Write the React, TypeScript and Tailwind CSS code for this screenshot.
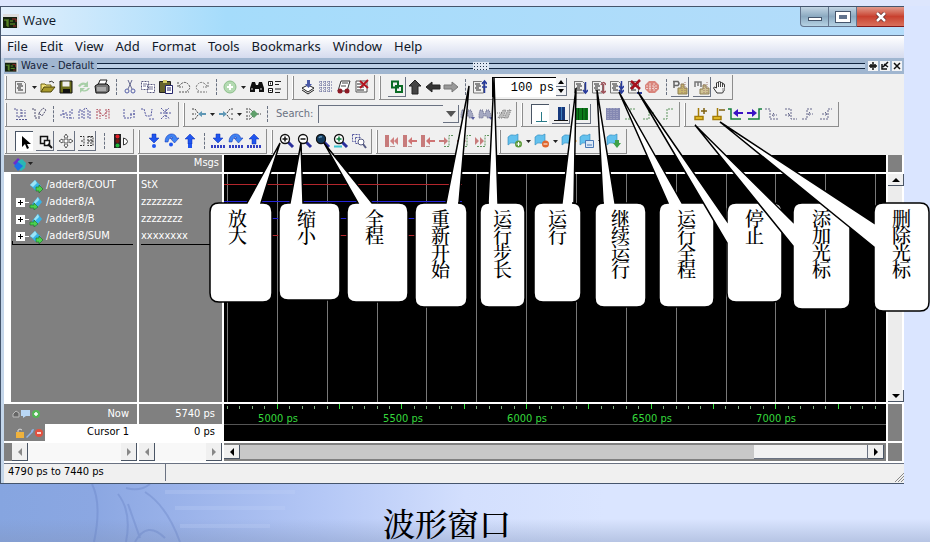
import type { ReactNode } from "react";

interface IToolProps {
	name: string;
	label?: string;
	raised?: boolean;
	pressed?: boolean;
}

const page = (
	<>
		<path d="M2.5 2v12M2.5 2.5h8l2 2v9.5h-10" fill="none" stroke="#777" />
		<path d="M4 5h5M5 7h5M4 9h4M5 11h5" stroke="#222" />
	</>
);

const lens = (
	<>
		<path d="M9 9l5 5" stroke="#2a2f9c" strokeWidth="3" />
		<circle cx="6" cy="6" r="4.5" fill="#fff" stroke="#111" strokeWidth="1.3" />
	</>
);

const downArrow = (
	<path d="M6 1h4v4h3L8 10 3 5h3z" fill="#1f55ee" stroke="#0b2bb0" strokeWidth=".5" />
);

const hopArrow = (
	<path d="M1 9C1-1 12-1 12.500 5H15l-4.500 5L6 5h3C7 2.500 5 5 4 9z" fill="#3f83f2" stroke="#0b2bb0" strokeWidth=".5" />
);

const upArrow = (
	<path d="M6 11V6H3l5-5 5 5h-3v5z" fill="#1f55ee" stroke="#0b2bb0" strokeWidth=".5" />
);

const flag = (
	<path d="M1 4q3-3 5-2t5-1v8q-3 2-5 1t-5 2z" fill="#63c1ee" stroke="#2c86bb" strokeWidth=".6" />
);

const dots = <path d="M1 13.500h14" stroke="#3340c0" strokeWidth="3" strokeDasharray="2 1" />;

const icons: Record<string, ReactNode> = {
	new: page,
	open: (
		<>
			<path d="M1 13V5h4l1 1h5v2" fill="#f2e27a" stroke="#6f6415" />
			<path d="M1 13l3-5h11l-4 5z" fill="#a8992c" stroke="#4d450c" />
			<path d="M9 3q3-2 5 1" fill="none" stroke="#333" />
		</>
	),
	save: (
		<>
			<path d="M2 2h12v12H2z" fill="#6b6d1c" stroke="#111" />
			<path d="M4.500 2.500h7v5h-7z" fill="#eee" />
			<path d="M5 10h7v4H5z" fill="#111" />
		</>
	),
	reload: <path d="M2 7q3-5 8-3l2-2v6H7l2-2q-3-1-5 2zM14 9q-3 5-8 3l-2 2V9h5l-2 2q3 1 5-2z" fill="#a7cfa7" />,
	print: (
		<>
			<path d="M4 6l2-5h7l-2 5" fill="#fff" stroke="#222" />
			<path d="M1 7l3-2h9l2 2v5l-3 2H2z" fill="#777" stroke="#111" />
			<path d="M3 9h9M3 11h9" stroke="#ddd" />
		</>
	),
	cut: (
		<>
			<path d="M6 1l4 9M10 1L6 10" stroke="#666a92" />
			<circle cx="5" cy="12" r="2" fill="none" stroke="#5560a8" />
			<circle cx="11" cy="12" r="2" fill="none" stroke="#5560a8" />
		</>
	),
	copy: (
		<>
			<path d="M1.500 2.500h7v8h-7zM7.500 5.500h7v8h-7z" fill="#fff" stroke="#55557c" strokeDasharray="2 1" />
			<path d="M3 5h4M3 7h3M9 8h4M9 10h4" stroke="#757595" />
		</>
	),
	paste: (
		<>
			<path d="M1.500 2.500h11v11h-11z" fill="#65632c" stroke="#222" />
			<path d="M5 1h4v3H5z" fill="#d7cf6a" />
			<path d="M7.500 6.500h7v8h-7z" fill="#fff" stroke="#24246a" />
			<path d="M9 9h4M9 11h4" stroke="#24246a" />
		</>
	),
	undo: <path d="M2 3v5h5M3 7q5-6 9-2t-1 7M3 13h10" fill="none" stroke="#555" strokeDasharray="2 1" />,
	redo: <path d="M14 3v5H9M13 7q-5-6-9-2t1 7M3 13h10" fill="none" stroke="#777" strokeDasharray="2 1" />,
	add: (
		<>
			<circle cx="8" cy="8" r="6" fill="#b4dab2" stroke="#8cbf8a" />
			<path d="M8 5v6M5 8h6" stroke="#fff" strokeWidth="2" />
		</>
	),
	find: (
		<>
			<path d="M3 3h3l1 3h2l1-3h3l2 6v4h-5v-3H6v3H1V9z" fill="#111" />
			<path d="M3 9v2M12 9v2" stroke="#ddd" />
		</>
	),
	tree: (
		<>
			<path d="M1.500 2.500h4v4h-4zM1.500 9.500h4v4h-4z" fill="#fff" stroke="#111" />
			<path d="M3.500 3.500v2M2.500 11.500h2M8 2.500h6M8 5.500h4M8 10h6M8 13.500h5" stroke="#222" />
		</>
	),
	compile: (
		<>
			<path d="M2 9l6-3 6 3-6 4z" fill="#fff" stroke="#222" />
			<path d="M2 11l6 4 6-4" fill="none" stroke="#222" />
			<path d="M7 1h3v4h2L8.500 9 5 5h2z" fill="#4b5aa8" />
		</>
	),
	grid: <path d="M1 3h14M1 6h14M1 9h14M1 12h14M3 2v12M7 2v12M11 2v12" stroke="#555a8f" strokeDasharray="1 1" />,
	simulate: (
		<>
			<path d="M5 2h9l-3 10H2z" fill="#fff" stroke="#333" />
			<path d="M6 4h6M5 7h5" stroke="#444" />
			<circle cx="4" cy="12" r="2.500" fill="#8d1a25" />
			<circle cx="11" cy="12" r="2.500" fill="#8d1a25" />
		</>
	),
	breakSim: (
		<>
			<path d="M2 2h11v11H2z" fill="#fff" stroke="#555" />
			<path d="M3 5h5M3 8h7M3 11h7" stroke="#222" />
			<path d="M6 2l8 7M14 1L6 9" stroke="#b1121d" strokeWidth="2" />
		</>
	),
	env: <path d="M3 2.500h6v6H3zM7 7h6v6H7z" fill="none" stroke="#0a6b25" strokeWidth="2" />,
	up: <path d="M8 1l6 6h-3v8H5V7H2z" fill="#444" stroke="#222" />,
	back: <path d="M1 8l6-5v3h8v4H7v3z" fill="#333" stroke="#222" />,
	forward: <path d="M15 8L9 3v3H1v4h8v3z" fill="#999" stroke="#777" />,
	restart: (
		<>
			{page}
			<path d="M13.500 2v12M11 5l2.500-3L16 5M11 8h5" fill="none" stroke="#273a9c" strokeWidth="1.500" />
		</>
	),
	run: (
		<>
			{page}
			<path d="M13.500 3v11M11 11l2.500 3 2.500-3" fill="none" stroke="#273a9c" strokeWidth="1.500" />
		</>
	),
	runContinue: (
		<>
			{page}
			<path d="M13.500 5v9M11 6q2.500-5 5 0M11 12l2.500 2 2.500-2" fill="none" stroke="#a0525a" strokeWidth="1.500" />
		</>
	),
	runAll: (
		<>
			{page}
			<path d="M13.500 2v12M11 7l2.500 3L16 7M11 11l2.500 3 2.500-3" fill="none" stroke="#273a9c" strokeWidth="1.500" />
		</>
	),
	stop: (
		<>
			{page}
			<path d="M5 2l9 8M14 1L5 10" stroke="#a5111b" strokeWidth="2.500" />
			<path d="M11 14h5" stroke="#273a9c" strokeWidth="2" />
		</>
	),
	halt: (
		<>
			<path d="M5 2h6l4 4v4l-4 4H5l-4-4V6z" fill="#d9857c" />
			<path d="M2 7h12M2 9.500h12M6 4v8M10 4v8" stroke="#f1d3cf" strokeDasharray="2 1" />
		</>
	),
	profile: (
		<>
			<path d="M1 2.500h5q2 2 0 4H2M2 3v6" fill="none" stroke="#666" strokeWidth="1.500" />
			<path d="M6 9h3V5h3v4h3v6H6z" fill="#c8b66d" stroke="#8d7f52" />
			<path d="M10 5v9M13 3v12" stroke="#a07a70" strokeDasharray="1 1" />
		</>
	),
	memory: (
		<>
			<path d="M1 8V3h3v4V3h3v5" fill="none" stroke="#777" strokeWidth="1.500" />
			<path d="M6 10h3V6h3v3h3v6H6z" fill="#d0c394" stroke="#8d7f52" />
			<path d="M10 5v9M13 3v12" stroke="#a07a70" strokeDasharray="1 1" />
		</>
	),
	hand: (
		<>
			<path d="M5 14L1.500 9q0-2 3 0V4q1-2 2 0V3q1-2 2 0v1q1-2 2 0v1q2-1 2 1v5l-2 3z" fill="#f5f5f5" stroke="#333" />
			<path d="M6.500 4v4M8.500 4v4M10.500 5v3" stroke="#444" />
			<path d="M11 9v4M12.500 8v4" stroke="#888" />
		</>
	),
	edgeIn: <path d="M1 3h3v8h4V3M9 11V4M12 11V4M3 13.500h11" fill="none" stroke="#5b5d96" strokeDasharray="2 1" />,
	edit: <path d="M1 3h3v9h5M8 7l4-5 3 2-4 6zM8 7v4" fill="none" stroke="#505070" strokeDasharray="2 1" />,
	waveA: <path d="M1 9h3V3M5 12V7h3v5h3V5M11 12h4M13 3v5" fill="none" stroke="#5558a0" strokeDasharray="2 1" />,
	waveB: <path d="M2 13V4h3v9M7 13V3l2-1 2 2v9M13 13V5" fill="none" stroke="#5558a0" strokeDasharray="2 1" />,
	waveC: <path d="M2 13V3l6 7 6-7v10M5 3v10M11 3v10" fill="none" stroke="#b04a58" strokeDasharray="2 1" />,
	waveD: <path d="M2 3v9h7V8M8 8h6M12 4v8" fill="none" stroke="#5558a0" strokeDasharray="2 1" />,
	waveE: <path d="M1 3h3l2 7h5l1-7M9 13h6" fill="none" stroke="#5558a0" strokeDasharray="2 1" />,
	waveF: <path d="M3 2l4 4 4-4M2 7h12M3 13l4-4 5 4M8 3v10" fill="none" stroke="#5558a0" strokeDasharray="2 1" />,
	mergeLeft: (
		<>
			<path d="M1 3h3l3 4M1 13h3l3-4M1 8h4" fill="none" stroke="#444" strokeDasharray="2 1" />
			<path d="M7 8l4-3v2h4v2h-4v2z" fill="#5f97b5" />
		</>
	),
	splitRight: (
		<>
			<path d="M15 3h-3L9 7M15 13h-3L9 9M15 8h-3" fill="none" stroke="#444" strokeDasharray="2 1" />
			<path d="M9 8L5 5v2H1v2h4v2z" fill="#5f97b5" />
		</>
	),
	mergeBoth: (
		<>
			<path d="M1 3h4l3 3M1 13h4l3-3M1 6h4M1 10h4M12 8h4" fill="none" stroke="#444" strokeDasharray="2 1" />
			<path d="M5 8l4-4 4 4-4 4z" fill="#5f9f6a" />
		</>
	),
	findNext: (
		<>
			<path d="M2 4h3v3h3V4h3l2 5v3H9v-2H5v2H1V8z" fill="#a5a9c2" stroke="#6b6f8f" strokeDasharray="1 1" />
			<path d="M11 11h4l-2 3z" fill="#5a5fa0" />
		</>
	),
	findAll: <path d="M2 12l5-8h3l-3 8zM8 12l4-8h3l-3 8zM1 7h6" fill="#bbb" stroke="#777" strokeDasharray="1 1" />,
	viewLine: <path d="M8.500 5v9M3 14.500h11" stroke="#287a88" fill="none" />,
	viewBar: (
		<>
			<path d="M5 1h7v13H5z" fill="#16387c" />
			<path d="M8.500 1v13" stroke="#3d7db9" />
			<path d="M1 14.500h14" stroke="#111" />
		</>
	),
	viewFull: (
		<>
			<path d="M1 2h13v12H1z" fill="#0c7a1a" />
			<path d="M4.500 2v12M8.500 2v12M12 2v12" stroke="#064a0d" />
		</>
	),
	viewHatch: (
		<>
			<path d="M1 2h14v12H1z" fill="#8488b2" />
			<path d="M3 2v12M6 2v12M9 2v12M12 2v12" stroke="#b3b5cd" strokeDasharray="1 1" />
		</>
	),
	stepUp: <path d="M2 13h5V3h6" fill="none" stroke="#5f955f" strokeDasharray="2 1" />,
	stepMid: <path d="M2 13h6V3M8 7h5" fill="none" stroke="#5f955f" strokeDasharray="2 1" />,
	stepHigh: <path d="M4 13h4V3h7" fill="none" stroke="#5f955f" strokeDasharray="2 1" />,
	cursorAdd: (
		<>
			<path d="M6.500 2v8M3 10.500h8v3H3z" fill="#f0c92b" stroke="#a47c08" strokeWidth="1.500" />
			<path d="M9 5h6M12 2v6" stroke="#7d6010" strokeWidth="1.500" />
		</>
	),
	cursorDel: (
		<>
			<path d="M7.500 2v8M3 10.500h8v3H3z" fill="#f0c92b" stroke="#a47c08" strokeWidth="1.500" />
			<path d="M9 4h6" stroke="#7d6010" strokeWidth="1.500" />
		</>
	),
	prevEdge: (
		<>
			<path d="M0 3h3v10h10" fill="none" stroke="#15803d" strokeWidth="1.500" />
			<path d="M5 7l5-4v3h5v2h-5v3z" fill="#3a12c4" />
		</>
	),
	nextEdge: (
		<>
			<path d="M2 13h11V3h3" fill="none" stroke="#15803d" strokeWidth="1.500" />
			<path d="M11 7L6 3v3H1v2h5v3z" fill="#3a12c4" />
		</>
	),
	fallL: <path d="M1 3h5v10h8M9 9h4M10 7l-2 2 2 2" fill="none" stroke="#66698c" strokeDasharray="2 1" />,
	fallR: <path d="M3 3h6v10h6M3 9h5M6 7l2 2-2 2" fill="none" stroke="#66698c" strokeDasharray="2 1" />,
	riseL: <path d="M2 13h5V3h6M9 8h4M10 6l-2 2 2 2" fill="none" stroke="#66698c" strokeDasharray="2 1" />,
	riseR: <path d="M2 13h8V3h4M4 8h5M7 6l2 2-2 2" fill="none" stroke="#66698c" strokeDasharray="2 1" />,
	select: <path d="M5 2v11l3-3 2 5 2-1-2-4h4z" fill="#000" />,
	zoomMode: (
		<>
			<path d="M3.500 3.500h7v7h-7z" fill="none" stroke="#111" strokeWidth="1.500" />
			<path d="M7.500 7.500h5v5h-5z" fill="#fff" stroke="#111" strokeWidth="1.500" />
			<path d="M11 11l4 4" stroke="#111" strokeWidth="2" />
		</>
	),
	pan: <path d="M8 1l2 3H9v3h3V6l3 2-3 2V9H9v3h1l-2 3-2-3h1V9H4v1L1 8l3-2v1h3V4H6z" fill="#fff" stroke="#555" />,
	twoCursor: (
		<path d="M1 3.500h4v9H1M2 8h3M9 3v10M9 3.500h5v9H9M9 8h5M12 3v10" fill="none" stroke="#333" strokeDasharray="2 1" />
	),
	traffic: (
		<>
			<path d="M1 1h7v14H1z" fill="#222" />
			<circle cx="4.500" cy="3.500" r="2" fill="#e31e26" />
			<circle cx="4.500" cy="8" r="2" fill="#7b1b12" />
			<circle cx="4.500" cy="12.500" r="2" fill="#21b63a" />
			<path d="M10.500 5v7q4-1 4-3.500T10.500 5z" fill="#fff" stroke="#333" />
		</>
	),
	stepInto: (
		<>
			{downArrow}
			<circle cx="8" cy="13" r="2" fill="#1f55ee" />
		</>
	),
	stepOver: (
		<>
			{hopArrow}
			<circle cx="7" cy="11.500" r="2" fill="#1f55ee" />
		</>
	),
	stepOut: (
		<>
			{upArrow}
			<path d="M6 11h4v4H6z" fill="#1f55ee" />
		</>
	),
	stepIntoCur: (
		<>
			{downArrow}
			{dots}
		</>
	),
	stepOverCur: (
		<>
			{hopArrow}
			{dots}
		</>
	),
	stepOutCur: (
		<>
			{upArrow}
			{dots}
		</>
	),
	zoomIn: (
		<>
			{lens}
			<path d="M6 3.500v5M3.500 6h5" stroke="#111" strokeWidth="1.500" />
		</>
	),
	zoomOut: (
		<>
			{lens}
			<path d="M3.500 6h5" stroke="#111" strokeWidth="1.500" />
		</>
	),
	zoomFull: (
		<>
			{lens}
			<circle cx="6" cy="6" r="4.500" fill="#123a5e" stroke="#111" />
			<path d="M4 5q1-2 3-1" stroke="#5f93b7" fill="none" strokeWidth="1.500" />
		</>
	),
	zoomCursor: (
		<>
			<path d="M1 13.500h8" stroke="#39c5d0" strokeWidth="2" />
			{lens}
			<path d="M6 3.500v5M3.500 6h5" stroke="#0d7d3f" strokeWidth="1.500" />
		</>
	),
	zoomOther: (
		<>
			<path d="M1.500 1.500h7v6M4.500 4.500h6M1.500 1.500v7h3M4.500 4.500v6h3" fill="none" stroke="#5558a0" strokeDasharray="2 1" />
			<circle cx="10" cy="9" r="3" fill="#fff" stroke="#565b83" />
			<path d="M12 11l3 4" stroke="#565b83" strokeWidth="2" />
		</>
	),
	markA: (
		<>
			<path d="M1 2h4v12H1z" fill="#c77b7b" />
			<path d="M6 8l4-4v8zM10 8l4-4v8z" fill="#cf7f7f" />
			<path d="M6 13.500h5" stroke="#b99" />
		</>
	),
	markB: (
		<>
			<path d="M1 2h4v12H1z" fill="#c77b7b" />
			<path d="M6 8l4-4v3h5v2h-5v3z" fill="#cf7474" />
			<path d="M6 13.500h4" stroke="#b99" />
		</>
	),
	markC: (
		<>
			<path d="M10 8L6 4v3H1v2h5v3z" fill="#c77b7b" />
			<path d="M6 13.500h5V2.500h4" stroke="#5f955f" fill="none" strokeDasharray="2 1" />
		</>
	),
	markD: (
		<>
			<path d="M1 4l4 4-4 4zM6 4l4 4-4 4z" fill="#c77b7b" />
			<path d="M3 13.500h8V2.500h4" stroke="#5f955f" fill="none" strokeDasharray="2 1" />
		</>
	),
	flagAdd: (
		<>
			{flag}
			<circle cx="11.500" cy="11" r="3.500" fill="#5d9a3c" />
			<path d="M11.500 9v4M9.500 11h4" stroke="#fff" />
		</>
	),
	flagDel: (
		<>
			{flag}
			<circle cx="11.500" cy="11" r="3.500" fill="#e0662d" />
			<path d="M9.500 11h4" stroke="#fff" />
		</>
	),
	flagEdit: (
		<>
			{flag}
			<path d="M8 13l6-7 2 2-6 6z" fill="#e9a13a" />
		</>
	),
	flagSave: (
		<>
			{flag}
			<path d="M6.500 7.500h8v7h-8z" fill="#dbe9f7" stroke="#4877b5" />
			<path d="M8 12h5" stroke="#4877b5" />
		</>
	),
	flagGo: (
		<>
			{flag}
			<path d="M9 7h4v3h2l-4 5-4-5h2z" fill="#3fa14a" />
		</>
	),
};

const Tool = ({ name, label, raised, pressed }: IToolProps) => (
	<button
		type="button"
		aria-label={label ?? name}
		className={
			pressed
				? "flex h-5 w-[18px] shrink-0 items-center justify-center border-t border-l border-gray-600 bg-white"
				: raised
					? "flex h-5 w-[18px] shrink-0 items-center justify-center border-r border-b border-gray-500"
					: "flex h-5 w-[18px] shrink-0 items-center justify-center"
		}
	>
		<svg viewBox="0 0 16 16" className="size-4 shrink-0" aria-hidden="true">
			{icons[name]}
		</svg>
	</button>
);

const Caret = () => (
	<span className="flex w-[9px] shrink-0 items-center justify-center">
		<svg viewBox="0 0 5 3" className="h-[3px] w-[5px]" aria-hidden="true">
			<path d="M0 0h5L2.500 3z" fill="#222" />
		</svg>
	</span>
);

const Sep = () => (
	<span className="flex w-[10px] shrink-0 justify-center">
		<span className="h-4 border-l border-dashed border-gray-500" />
	</span>
);

const Group = ({ children, gap }: { children: ReactNode; gap?: boolean }) => (
	<div
		className={
			gap
				? "flex h-[25px] shrink-0 items-center gap-[3px] border-r border-b border-[#8d8d8d] pr-[3px]"
				: "flex h-[25px] shrink-0 items-center border-r border-b border-[#8d8d8d] pr-[3px]"
		}
	>
		<span className="mr-[5px] h-[23px] w-[2px] border-r border-[#8d8d8d] bg-white" />
		{children}
	</div>
);

const Tools = ({ names }: { names: string[] }) => (
	<>
		{names.map((name) => (
			<Tool key={name} name={name} />
		))}
	</>
);

const Toolbars = () => (
	<div className="flex flex-col gap-[2px] bg-[#f0f0f0] pt-px pb-px pl-px">
		<div className="flex gap-1">
			<Group>
				<Tool name="new" />
				<Caret />
				<Tools names={["open", "save", "reload", "print"]} />
				<Sep />
				<Tools names={["cut", "copy", "paste", "undo", "redo"]} />
				<Sep />
				<Tool name="add" />
				<Caret />
				<Tools names={["find", "tree"]} />
			</Group>
			<Group>
				<Tools names={["compile", "grid", "simulate", "breakSim"]} />
			</Group>
			<Group>
				<span className="w-[2px]" />
				<Tool name="env" raised />
				<Tools names={["up", "back", "forward"]} />
				<Sep />
				<Tool name="restart" label="重新开始" />
				<label className="ml-1 flex">
					<span className="sr-only">Run length</span>
					<input
						defaultValue="100 ps"
						size={6}
						className="h-5 w-[64px] border-t border-l border-black bg-white pr-[2px] text-right font-['Liberation_Mono',monospace] text-xs leading-[18px] text-black"
					/>
				</label>
				<span className="mr-1 flex flex-col">
					<button type="button" aria-label="Increase" className="flex h-[9px] w-[11px] items-center justify-center border-r border-b border-gray-500 bg-gray-100">
						<svg viewBox="0 0 6 4" className="h-1 w-[6px]"><path d="M3 0l3 4H0z" /></svg>
					</button>
					<button type="button" aria-label="Decrease" className="flex h-[9px] w-[11px] items-center justify-center border-r border-b border-gray-500 bg-gray-100">
						<svg viewBox="0 0 6 4" className="h-1 w-[6px]"><path d="M0 0h6L3 4z" /></svg>
					</button>
				</span>
				<Tools names={["run", "runContinue", "runAll", "stop", "halt"]} />
				<Sep />
				<Tool name="profile" raised />
				<span className="w-1" />
				<Tool name="memory" raised />
				<Tool name="hand" />
			</Group>
		</div>
		<div className="flex gap-1">
			<Group>
				<Tools names={["edgeIn", "edit"]} />
				<Sep />
				<Tools names={["waveA", "waveB", "waveC"]} />
				<span className="w-[9px]" />
				<Tools names={["waveD", "waveE", "waveF"]} />
			</Group>
			<Group>
				<Tool name="mergeLeft" />
				<Caret />
				<Tool name="splitRight" />
				<Caret />
				<Tool name="mergeBoth" />
				<Sep />
				<label htmlFor="search" className="ml-1 w-[42px] text-[11px] text-gray-500">
					Search:
				</label>
				<input id="search" className="h-[18px] w-[125px] border-t border-l border-gray-500 bg-[#f0f0f0] text-[11px]" />
				<button type="button" aria-label="Search history" className="flex h-[18px] w-4 items-center justify-center border-r border-b border-gray-500">
					<svg viewBox="0 0 10 6" className="h-[6px] w-[10px]"><path d="M0 0h10L5 6z" fill="#555" /></svg>
				</button>
				<Tool name="findNext" />
				<Tools names={["findNext", "findAll"]} />
			</Group>
			<Group gap>
				<Tool name="viewLine" pressed />
				<Tool name="viewBar" raised />
				<Tool name="viewFull" raised />
				<div className="flex items-center">
					<Sep />
					<Tools names={["viewHatch", "stepUp", "stepMid", "stepHigh"]} />
				</div>
			</Group>
			<Group>
				<Tools names={["cursorAdd", "cursorDel", "prevEdge", "nextEdge", "fallL", "fallR", "riseL", "riseR"]} />
			</Group>
		</div>
		<div className="flex gap-1">
			<Group gap>
				<Tool name="select" pressed />
				<Tool name="zoomMode" raised />
				<Tool name="pan" raised />
				<Tool name="twoCursor" raised />
				<Sep />
				<Tool name="traffic" />
			</Group>
			<Group>
				<Tools names={["stepInto", "stepOver", "stepOut"]} />
				<Sep />
				<Tools names={["stepIntoCur", "stepOverCur", "stepOutCur"]} />
			</Group>
			<Group>
				<Tool name="zoomIn" label="放大" />
				<Tool name="zoomOut" label="缩小" />
				<Tool name="zoomFull" label="全程" />
				<Tools names={["zoomCursor", "zoomOther"]} />
			</Group>
			<Group>
				<Tools names={["markA", "markB"]} />
				<Tool name="markB" />
				<Tool name="markC" />
				<Tool name="markC" />
				<Tool name="markD" />
			</Group>
			<Group>
				<Tool name="flagAdd" />
				<Caret />
				<Tool name="flagDel" />
				<Caret />
				<Tool name="flagEdit" />
				<Tool name="flagSave" />
				<Caret />
				<Tool name="flagGo" />
			</Group>
		</div>
	</div>
);

const AppIcon = ({ small }: { small?: boolean }) => (
	<svg viewBox="0 0 16 14" className={small ? "h-3 w-[13px]" : "h-[14px] w-4"} aria-hidden="true">
		<path d="M0 0h16v14H0z" fill="#ddd" />
		<path d="M0 3h14v11H0z" fill="#14220f" />
		<path d="M1 6h3v6M5 5v8M7 7h3M7 10h5" stroke="#6aa32f" fill="none" />
		<path d="M9 5h4v3M10 12h3" stroke="#a32a2a" fill="none" />
	</svg>
);

const TitleBar = () => (
	<div className="flex h-[29px] items-start border-t border-slate-600 bg-gradient-to-r from-[#e2effc] via-[#a5dcfb] via-25% to-[#b4dcfa]">
		<div className="flex h-full grow items-center gap-1 pl-[2px] font-['Open_Sans','Noto_Sans',sans-serif] text-[13px] text-gray-900">
			<AppIcon />
			Wave
		</div>
		<button type="button" aria-label="Minimize" className="flex h-5 w-[29px] items-center justify-center rounded-bl border-r border-b border-l border-slate-500 bg-gradient-to-b from-[#c3d5e4] via-[#8ba9c0] to-[#b5d2e4]">
			<span className="mt-1 h-1 w-[14px] border border-slate-600 bg-white" />
		</button>
		<button type="button" aria-label="Maximize" className="flex h-5 w-7 items-center justify-center border-r border-b border-slate-500 bg-gradient-to-b from-[#c3d5e4] via-[#8ba9c0] to-[#b5d2e4]">
			<span className="h-[10px] w-[14px] border-[3px] border-white bg-slate-500 outline outline-slate-600" />
		</button>
		<button type="button" aria-label="Close" className="flex h-5 w-[47px] items-center justify-center border-b border-red-900 bg-gradient-to-b from-[#e0998b] via-[#c8402f] to-[#d9705c]">
			<svg viewBox="0 0 12 10" className="h-[10px] w-3">
				<path d="M2 1l8 8M10 1L2 9" stroke="#5c2a2a" strokeWidth="4" />
				<path d="M2 1l8 8M10 1L2 9" stroke="#fff" strokeWidth="2.500" />
			</svg>
		</button>
	</div>
);

const menus = ["File", "Edit", "View", "Add", "Format", "Tools", "Bookmarks", "Window", "Help"];

const MenuBar = () => (
	<nav className="flex h-[23px] items-center gap-3 border-t border-slate-500 bg-gradient-to-b from-white to-[#d5dbee] pl-[6px] font-['Noto_Sans','Open_Sans',sans-serif] text-[13px] text-gray-900">
		{menus.map((menu) => (
			<button key={menu} type="button">
				{menu}
			</button>
		))}
	</nav>
);

const PaneHeader = () => (
	<div className="flex h-4 items-center gap-[3px] bg-[#a0b6d0] pl-px text-[11px] text-[#16243a]">
		<AppIcon small />
		<span>Wave - Default</span>
		<span className="flex h-[6px] grow items-stretch border-y border-[#10243f] bg-[#bdd0e6]">
			<span className="grow" />
			<span className="my-[-2px] w-4 bg-[radial-gradient(#23344e_35%,#dfe8f4_40%)] bg-[size:3px_3px]" />
			<span className="grow" />
		</span>
		<span className="flex gap-[2px] pr-[2px]">
			{["M5 1v8M1 5h8M3 3v4M7 3v4", "M8 1L3 6M2 3v5h5M4 3l4 3", "M2 2l6 6M8 2L2 8"].map((d) => (
				<button key={d} type="button" aria-label="Pane control" className="size-[10px] bg-gray-100">
					<svg viewBox="0 0 10 10" className="size-[10px]">
						<path d={d} fill="none" stroke="#111" strokeWidth="1.500" />
					</svg>
				</button>
			))}
		</span>
	</div>
);

const signals = [
	{ name: "/adder8/COUT", value: "StX", bus: false, output: true, color: "#b3262c" },
	{ name: "/adder8/A", value: "zzzzzzzz", bus: true, output: false, color: "#2424d8" },
	{ name: "/adder8/B", value: "zzzzzzzz", bus: true, output: false, color: "#2424d8" },
	{ name: "/adder8/SUM", value: "xxxxxxxx", bus: true, output: true, color: "#b3262c" },
];

const SignalIcon = ({ output }: { output: boolean }) => (
	<svg viewBox="0 0 14 14" className="h-[14px] w-[14px]" aria-hidden="true">
		<path d={output ? "M1 6l5-5 6 6-5 5z" : "M3 8l6-7 4 5-6 7z"} fill="#35b4e8" />
		<path d={output ? "M1 6l5-5 2 3-4 4z" : "M5 6l4-5 1 3-4 4z"} fill="#9be4f7" />
		<path d={output ? "M7 8h3V6l4 4-4 4v-2H7z" : "M1 9h4V7l4 4-4 3v-2H1z"} fill="#4bd04e" stroke="#176b26" strokeWidth=".6" />
	</svg>
);

const NamePane = () => (
	<div className="flex bg-[#808080]">
		<div className="w-[7px] bg-white" />
		<div className="flex grow flex-col pt-[3px]">
			{signals.map((s) => (
				<div key={s.name} className="flex h-[17px] items-center pl-[5px]">
					{s.bus ? (
						<button type="button" aria-label={`Expand ${s.name}`} className="flex size-[9px] items-center justify-center bg-white">
							<svg viewBox="0 0 9 9" className="size-[9px]"><path d="M4.500 2v5M2 4.500h5" stroke="#000" /></svg>
						</button>
					) : (
						<span className="w-[9px]" />
					)}
					<span className={s.bus ? "w-1 border-t border-white" : "w-1"} />
					<SignalIcon output={s.output} />
					<span className="ml-[3px]">{s.name}</span>
				</div>
			))}
			<div className="-mt-1 mr-1 ml-px h-1 border-b border-l border-black" />
		</div>
	</div>
);

const ValuePane = () => (
	<div className="bg-[#808080] pt-[3px] pl-[2px]">
		{signals.map((s) => (
			<div key={s.name} className="flex h-[17px] items-center">
				{s.value}
			</div>
		))}
		<div className="-mt-1 h-1 border-b border-black" />
	</div>
);

// The canvas starts just left of 4800 ps, one division every 200 ps
const gridLines = Array.from({ length: 40 }, (_, i) => 3 + Math.round(i * 49.85));
const ticks = Array.from({ length: 160 }, (_, i) => ({ x: 3 + Math.round(i * 12.46), major: i % 5 === 4 }));
const times = ["5000 ps", "5500 ps", "6000 ps", "6500 ps", "7000 ps"];

const WaveCanvas = () => (
	<div className="min-w-0 overflow-hidden bg-black">
		<svg className="h-full w-full" shapeRendering="crispEdges" aria-hidden="true">
			{gridLines.map((x) => (
				<line key={x} x1={x + 0.5} x2={x + 0.5} y1="0" y2="100%" stroke="#787878" />
			))}
			{signals.map((s, i) => (
				<line key={s.name} x1="0" x2="238" y1={10.5 + i * 17} y2={10.5 + i * 17} stroke={s.color} />
			))}
		</svg>
	</div>
);

const Timeline = () => (
	<div className="min-w-0 overflow-hidden bg-black">
		<svg className="h-full w-full" aria-hidden="true" shapeRendering="crispEdges">
			{ticks.map((t) => (
				<line key={t.x} x1={t.x + 0.5} x2={t.x + 0.5} y1={t.major ? 0 : 2} y2="5" stroke={t.major ? "#35e03c" : "#7fae7f"} />
			))}
			<line x1="0" x2="100%" y1="20.5" y2="20.5" stroke="#555" />
			{times.map((t, i) => (
				<text key={t} x={54 + Math.round(i * 124.6)} y="18" textAnchor="middle" fill="#35d83c" fontSize="11">
					{t}
				</text>
			))}
		</svg>
	</div>
);

const ArrowButton = ({ d, label, dim }: { d: string; label: string; dim?: boolean }) => (
	<button type="button" aria-label={label} className="flex min-h-3 w-4 shrink-0 items-center justify-center border-r border-b border-gray-600 bg-[#f0f0f0]">
		<svg viewBox="0 0 8 8" className="size-2">
			<path d={d} fill={dim ? "#888" : "#000"} />
		</svg>
	</button>
);

const left = "M6 0v8L2 4z";
const right = "M2 0v8l4-4z";

const SideScroll = () => (
	<div className="flex grow bg-[#f8f8f8]">
		<ArrowButton d={left} label="Scroll left" dim />
		<span className="grow" />
		<ArrowButton d={right} label="Scroll right" dim />
	</div>
);

const WavePane = () => (
	<div className="grid grow grid-cols-[133px_83px_1fr_14px] grid-rows-[17px_1fr_37px_18px] gap-[2px] bg-white pr-[2px] text-[11px] text-white">
		<div className="flex items-center bg-[#808080] pl-2">
			<svg viewBox="0 0 14 14" className="size-[14px]" aria-hidden="true">
				<path d="M1 6l5-5 4 4-5 5z" fill="#6b2fc9" />
				<path d="M6 4l4-2 4 4-1 5-4 3-4-3z" fill="#2ab6b4" />
				<path d="M2 9l4-4 5 4-5 5z" fill="#1c6fe8" />
			</svg>
			<Caret />
		</div>
		<div className="flex items-center justify-end bg-[#808080] pr-[3px]">Msgs</div>
		<div className="bg-black" />
		<div className="bg-[#808080]" />

		<NamePane />
		<ValuePane />
		<WaveCanvas />
		<div className="flex flex-col justify-between bg-[#ececec]">
			<ArrowButton d="M0 6h8L4 2z" label="Scroll up" />
			<ArrowButton d="M0 2h8L4 6z" label="Scroll down" />
		</div>

		<div className="flex flex-col bg-[#808080]">
			<div className="flex h-5 items-center pr-2 pl-2">
				<svg viewBox="0 0 28 10" className="h-[10px] w-7" aria-hidden="true">
					<path d="M1 5l3-3 3 2v4H1z" fill="#666" stroke="#bbb" />
					<path d="M9 1h9v6h-4l-3 2V7H9z" fill="#b9d7f5" />
					<circle cx="24" cy="5" r="4" fill="#53b554" />
					<path d="M24 3v4M22 5h4" stroke="#fff" strokeWidth="1.500" />
				</svg>
				<span className="grow text-right">Now</span>
			</div>
			<div className="flex grow">
				<span className="flex w-[41px] items-center justify-end pr-[2px]">
					<svg viewBox="0 0 28 10" className="h-[10px] w-7" aria-hidden="true">
						<path d="M1 4h8v6H1z" fill="#f0b23c" />
						<path d="M3 4V2q2-2 4 0" fill="none" stroke="#ddd" />
						<path d="M11 9l5-5q0-3 3-3-1 4-2 4l-5 5z" fill="#8fb4ea" />
						<circle cx="24" cy="5" r="4" fill="#e2503f" />
						<path d="M22 5h4" stroke="#fff" strokeWidth="1.500" />
					</svg>
				</span>
				<span className="flex grow items-center justify-end bg-white pr-2 text-black">Cursor 1</span>
			</div>
		</div>
		<div className="flex flex-col bg-[#808080] text-right">
			<div className="flex h-5 items-center justify-end pr-[7px]">5740 ps</div>
			<div className="flex grow items-center justify-end bg-white pr-[7px] text-black">0 ps</div>
		</div>
		<Timeline />
		<div className="bg-[#808080]" />

		<div className="flex bg-[#808080] pl-2">
			<SideScroll />
		</div>
		<div className="flex">
			<SideScroll />
		</div>
		<div className="flex border-y-2 border-r-2 border-[#808080] bg-[#c8c8c8]">
			<ArrowButton d={left} label="Scroll wave left" />
			<span className="grow" />
			<span className="w-[114px] border-r border-b border-gray-500 bg-[#f2f2f2]" />
			<ArrowButton d={right} label="Scroll wave right" />
		</div>
		<div className="bg-[#808080]" />
	</div>
);

const StatusBar = () => (
	<div className="border-t-2 border-white bg-[#f0f0f0] pb-[2px] text-[11px] text-black">
		<div className="flex h-[18px] items-center border-t border-gray-500">
			<span className="flex h-full w-[162px] items-center border-r border-gray-500 pl-1">4790 ps to 7440 ps</span>
			<span className="grow" />
			<svg viewBox="0 0 10 10" className="mt-2 size-[10px]" aria-hidden="true">
				<path d="M1 10l9-9M4 10l6-6M7 10l3-3" stroke="#888" />
			</svg>
		</div>
	</div>
);

interface ICallout {
	text: string;
	x: number;
	w: number;
	h: number;
	tip: [number, number];
	base: [number, number];
	side?: boolean;
	textX: number;
}

// base is measured along the top edge, or down the left edge when side is set
const callouts: ICallout[] = [
	{ text: "放大", x: 210, w: 62, h: 99, tip: [280, 143], base: [247, 261], textX: 228 },
	{ text: "缩小", x: 279, w: 61, h: 97, tip: [301, 143], base: [290, 303], textX: 297 },
	{ text: "全程", x: 347, w: 61, h: 99, tip: [324, 143], base: [358, 372], textX: 365 },
	{ text: "重新开始", x: 415, w: 52, h: 104, tip: [469, 86], base: [446, 459], textX: 431 },
	{ text: "运行步长", x: 480, w: 45, h: 104, tip: [494, 78], base: [488, 498], textX: 493 },
	{ text: "运行", x: 534, w: 47, h: 99, tip: [576, 88], base: [562, 574], textX: 548 },
	{ text: "继续运行", x: 595, w: 51, h: 104, tip: [597, 90], base: [603, 615], textX: 611 },
	{ text: "运行全程", x: 659, w: 55, h: 104, tip: [619, 92], base: [668, 682], textX: 677 },
	{ text: "停止", x: 727, w: 55, h: 99, tip: [638, 92], base: [221, 243], side: true, textX: 745 },
	{ text: "添加光标", x: 793, w: 57, h: 106, tip: [695, 125], base: [222, 246], side: true, textX: 812 },
	{ text: "删除光标", x: 874, w: 55, h: 108, tip: [720, 122], base: [223, 247], side: true, textX: 892 },
];

const bubble = ({ x, w, h, tip, base, side }: ICallout) => {
	const y = 203;
	const r = 9;
	const top = side ? "" : `H${base[0]}L${tip[0]} ${tip[1]}L${base[1]} ${y}`;
	const edge = side ? `V${base[1]}L${tip[0]} ${tip[1]}L${x} ${base[0]}` : "";
	return `M${x + r} ${y}${top}H${x + w - r}q${r} 0 ${r} ${r}V${y + h - r}q0 ${r} ${-r} ${r}H${x + r}q${-r} 0 ${-r} ${-r}${edge}V${y + r}q0 ${-r} ${r} ${-r}z`;
};

const Callouts = () => (
	<div className="pointer-events-none absolute inset-0 overflow-hidden">
		<svg className="absolute inset-0 h-full w-full" aria-hidden="true">
			{callouts.map((c) => (
				<path key={c.text} d={bubble(c)} fill="#fff" stroke="#000" strokeWidth="1.500" />
			))}
		</svg>
		{callouts.map((c) => (
			<p
				key={c.text}
				className="absolute top-[209px] w-5 font-['Noto_Serif_CJK_SC','Noto_Sans_CJK_SC',serif] text-[19px] leading-[17px] font-medium break-all text-black"
				style={{ left: c.textX }}
			>
				{c.text}
			</p>
		))}
	</div>
);

const App = () => {
	return (
		<main className="relative flex min-h-screen flex-col bg-[linear-gradient(to_right,#86a5e0,#8ba7e2_10%,#9bb3ea_20%,#b5c8f6_35%,#d3dffd_50%,#dae5ff_65%)] font-['DejaVu_Sans_Condensed','Noto_Sans',sans-serif]">
			<div className="h-[6px] bg-[#dde6fd]" />
			<div className="flex grow bg-[#dae5ff] pr-[26px]">
				<section className="flex grow flex-col border-b border-l border-slate-600 bg-[#c4d6ea]">
					<TitleBar />
					<MenuBar />
					<div className="flex grow flex-col pl-[3px]">
						<PaneHeader />
						<Toolbars />
						<WavePane />
						<StatusBar />
					</div>
				</section>
			</div>
			<footer className="relative flex h-[58px] items-center justify-center bg-gradient-to-t from-[#8093bb]/40 to-transparent to-40% pt-[18px]">
				<svg className="absolute top-0 left-0 h-full w-[300px]" viewBox="0 0 300 58" aria-hidden="true">
					<g fill="none" stroke="#5d78bd" strokeOpacity=".3" strokeWidth="2">
						<path d="M92 0q10 20 2 58M118 10q14 18 8 48M145 8q22 14 35 50M135 58q12-22 30-4M128 20l12 34M150 0q-10 8-24 4" />
					</g>
					<path d="M165 8h130M175 24h110M180 42h90" stroke="#c5d4f8" strokeOpacity=".25" strokeWidth="4" />
				</svg>
				<h1 className="relative mr-9 font-['Noto_Serif_CJK_SC','Noto_Sans_CJK_SC',serif] text-[32px] leading-9 font-medium text-black">波形窗口</h1>
			</footer>
			<Callouts />
		</main>
	);
};

export default App;
